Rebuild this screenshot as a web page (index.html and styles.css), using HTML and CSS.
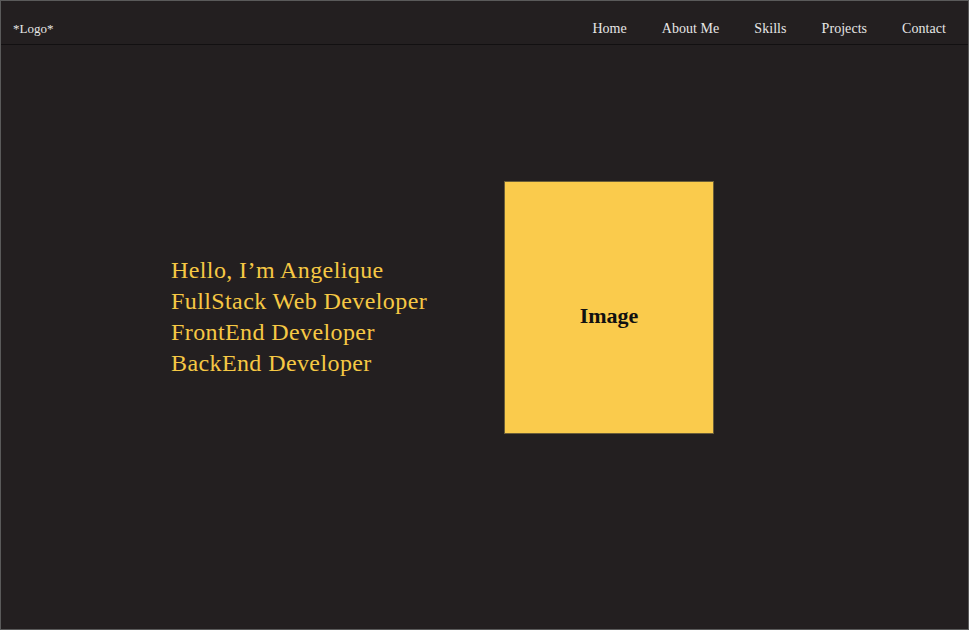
FILE: index.html
```html
<!DOCTYPE html>
<html lang="en">
<head>
<meta charset="utf-8">
<title>Angelique - Portfolio</title>
<link rel="stylesheet" href="styles.css">
</head>
<body>
<div class="frame">
  <header class="header">
    <div class="logo">*Logo*</div>
    <nav class="nav">
      <a class="nav-link" href="#">Home</a>
      <a class="nav-link" href="#">About Me</a>
      <a class="nav-link" href="#">Skills</a>
      <a class="nav-link" href="#">Projects</a>
      <a class="nav-link" href="#">Contact</a>
    </nav>
  </header>
  <main class="hero">
    <div class="intro">
      <p class="intro-line">Hello, I’m Angelique</p>
      <p class="intro-line">FullStack Web Developer</p>
      <p class="intro-line">FrontEnd Developer</p>
      <p class="intro-line">BackEnd Developer</p>
    </div>
    <div class="image-box">Image</div>
  </main>
</div>
</body>
</html>
```

FILE: styles.css
```css
* { box-sizing: border-box; }
html, body { margin: 0; padding: 0; background: #ffffff; }
body { font-family: "Liberation Serif", "Times New Roman", serif; }

.frame {
  width: 969px;
  height: 630px;
  background: #231f20;
  border: 1px solid #5a5a5a;
  display: flex;
  flex-direction: column;
}

.header {
  height: 44px;
  padding: 12px 22px 0 12px;
  border-bottom: 1px solid #121011;
  display: flex;
  align-items: center;
  justify-content: space-between;
}

.logo {
  color: #e6e6e6;
  font-size: 13px;
}

.nav {
  display: flex;
  gap: 35px;
}

.nav-link {
  color: #e6e6e6;
  font-size: 14px;
  letter-spacing: 0.05px;
  text-decoration: none;
}

.hero {
  flex: 1;
  display: flex;
  align-items: flex-start;
  padding-left: 170px;
}

.intro {
  width: 333px;
  margin-top: 210px;
}

.intro-line {
  margin: 0;
  color: #f6c844;
  font-size: 24px;
  line-height: 31px;
  letter-spacing: 0.4px;
}

.image-box {
  margin-top: 136px;
  width: 210px;
  height: 253px;
  background: #facb4c;
  border: 1px solid #6a5d38;
  display: flex;
  align-items: center;
  justify-content: center;
  padding-top: 16px;
  color: #111111;
  font-size: 22px;
  font-weight: bold;
}
```
